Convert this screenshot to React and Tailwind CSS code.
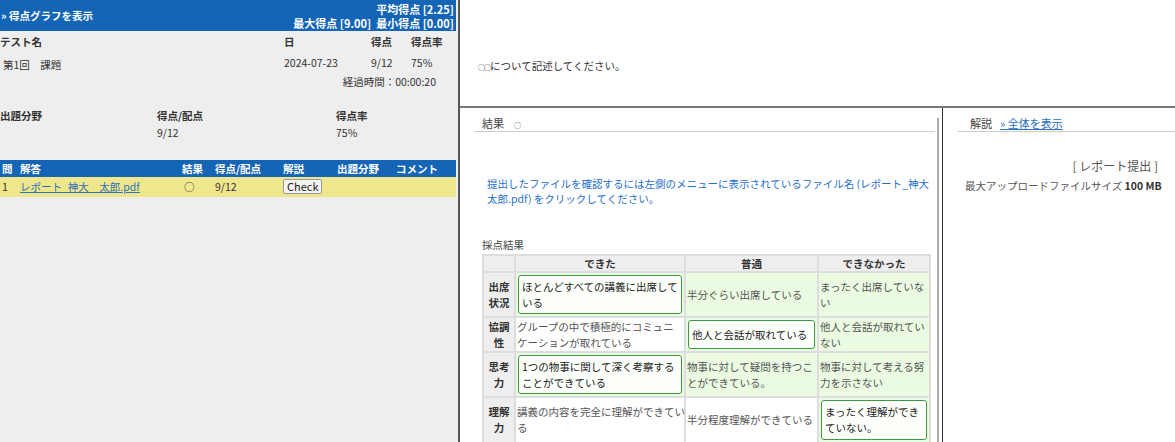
import React from 'react';

const rows = [
  { head: ['出席', '状況'], pick: 1, cells: [['ほとんどすべての講義に出席して', 'いる'], ['半分ぐらい出席している'], ['まったく出席していな', 'い']], h: 'h-[43px]' },
  { head: ['協調', '性'], pick: 2, cells: [['グループの中で積極的にコミュニ', 'ケーションが取れている'], ['他人と会話が取れている'], ['他人と会話が取れてい', 'ない']], h: 'h-[33px]' },
  { head: ['思考', '力'], pick: 1, cells: [['1つの物事に関して深く考察する', 'ことができている'], ['物事に対して疑問を持つこ', 'とができている。'], ['物事に対して考える努', '力を示さない']], h: 'h-[43px]' },
  { head: ['理解', '力'], pick: 3, cells: [['講義の内容を完全に理解ができてい', 'る'], ['半分程度理解ができている'], ['まったく理解ができ', 'ていない。']], h: 'h-[44px]' },
]

const Lines = ({ lines }) => lines.map((l, i) => <div key={i} className="whitespace-nowrap">{l}</div>)

const ScoreCell = ({ lines, col, pick, h }) => {
  const green = col > pick
  if (col === pick) {
    return (
      <div className={`${h} bg-[#eafbe2] p-[2px] flex items-center`}>
        <div className="w-full h-full rounded-[3px] border border-[#3f9b3f] bg-[#fcfffa] px-[3px] flex flex-col justify-center text-[#222]">
          <Lines lines={lines} />
        </div>
      </div>
    )
  }
  return (
    <div className={`${h} ${green ? 'bg-[#eafbe2]' : 'bg-white'} px-[1px] flex flex-col justify-center text-[#555]`}>
      <Lines lines={lines} />
    </div>
  )
}

export default function App() {
  return (
    <div className="flex w-[1175px] h-[442px] overflow-hidden bg-white font-['Noto_Sans_CJK_JP','Noto_Sans',sans-serif] text-[#333]">
      {/* left menu */}
      <div className="w-[460px] shrink-0 bg-[#eeeeee] border-r-2 border-[#555] text-[10.5px]">
        <div className="w-[456px] h-[31px] bg-[#1565b7] text-white font-bold flex items-center justify-between pr-[2px]">
          <div className="pl-[1px]">» 得点グラフを表示</div>
          <div className="text-right leading-[14px] text-[11px]">
            <div>平均得点 [2.25]</div>
            <div>最大得点 [9.00] &nbsp;最小得点 [0.00]</div>
          </div>
        </div>

        <div className="grid grid-cols-[284px_87px_40px_1fr] leading-[14px]">
          <div className="font-bold pt-[4px] h-[22px]">テスト名</div>
          <div className="font-bold pt-[4px]">日</div>
          <div className="font-bold pt-[4px]">得点</div>
          <div className="font-bold pt-[4px]">得点率</div>
          <div className="pl-[3px] pt-[5px] h-[22px]">第1回　課題</div>
          <div className="pt-[3px]">2024-07-23</div>
          <div className="pt-[3px]">9/12</div>
          <div className="pt-[3px]">75%</div>
        </div>
        <div className="w-[436px] text-right leading-[14px]">経過時間：00:00:20</div>

        <div className="grid grid-cols-[157px_179px_1fr] leading-[14px] mt-[20px]">
          <div className="font-bold h-[17px]">出題分野</div>
          <div className="font-bold">得点/配点</div>
          <div className="font-bold">得点率</div>
          <div></div>
          <div>9/12</div>
          <div>75%</div>
        </div>

        <div className="w-[456px] mt-[20px]">
          <div className="grid grid-cols-[20px_162px_33px_68px_54px_59px_1fr] h-[17px] bg-[#1565b7] text-white font-bold items-center">
            <div className="pl-[2px]">問</div>
            <div>解答</div>
            <div>結果</div>
            <div>得点/配点</div>
            <div>解説</div>
            <div>出題分野</div>
            <div>コメント</div>
          </div>
          <div className="grid grid-cols-[20px_162px_33px_68px_54px_59px_1fr] h-[20px] bg-[#f0e68c] items-center">
            <div className="pl-[2px]">1</div>
            <div><span className="text-[#2a6fc0] underline">レポート_神大　太郎.pdf</span></div>
            <div className="pl-[2px]">○</div>
            <div>9/12</div>
            <div>
              <button className="h-[15px] px-[3px] text-[11px] leading-[13px] text-[#222] bg-[#f4f4f4] border border-[#999] rounded-[2px]">Check</button>
            </div>
            <div></div>
            <div></div>
          </div>
        </div>
      </div>

      {/* right area */}
      <div className="flex-1 flex flex-col min-w-0">
        <div className="h-[108px] shrink-0 border-b-2 border-[#777] pl-[18px] pt-[59px] text-[10.5px] leading-[14px] text-[#333]">
          <span className="text-[7px] tracking-[-1px]">○○</span>について記述してください。
        </div>

        <div className="flex flex-1 min-h-0">
          {/* result frame */}
          <div className="w-[483px] shrink-0 border-r border-[#333] flex">
            <div className="w-[460px] ml-[15px] shrink-0">
              <div className="h-[24px] border-b border-[#ccc] pl-[7px] pt-[8px] text-[11px] leading-[14px] text-[#444]">
                結果<span className="ml-[10px] text-[7px]">○</span>
              </div>
              <div className="mt-[44px] pl-[12px] text-[10.5px] leading-[15px] text-[#1f6fcf]">
                <div className="whitespace-nowrap">提出したファイルを確認するには左側のメニューに表示されているファイル名 (レポート_神大</div>
                <div className="whitespace-nowrap">太郎.pdf) をクリックしてください。</div>
              </div>
              <div className="mt-[32px] pl-[7px] text-[10.5px] leading-[14px] text-[#444]">採点結果</div>
              <div className="ml-[7px] mt-[2px] w-[449px] grid grid-cols-[30px_168px_131px_110px] gap-[2px] p-[2px] bg-[#dddddd] text-[10.5px] leading-[16px]">
                <div className="h-[15px] bg-[#eeeeee]"></div>
                <div className="bg-[#eeeeee] font-bold text-center leading-[15px]">できた</div>
                <div className="bg-[#eeeeee] font-bold text-center leading-[15px]">普通</div>
                <div className="bg-[#eeeeee] font-bold text-center leading-[15px]">できなかった</div>
                {rows.map((r, i) => (
                  <React.Fragment key={i}>
                    <div className={`${r.h} bg-[#eeeeee] font-bold text-center flex flex-col justify-center text-[#333]`}>
                      <Lines lines={r.head} />
                    </div>
                    {r.cells.map((c, j) => (
                      <ScoreCell key={j} lines={c} col={j + 1} pick={r.pick} h={r.h} />
                    ))}
                  </React.Fragment>
                ))}
              </div>
            </div>
            <div className="w-[2px] ml-[2px] mt-[10px] bg-[#aaa]"></div>
          </div>

          {/* explanation frame */}
          <div className="flex-1 min-w-0">
            <div className="h-[24px] ml-[15px] border-b border-[#ccc] pl-[12px] pt-[8px] text-[11px] leading-[14px] text-[#444]">
              解説<span className="ml-[8px] text-[#2a6fc0] underline">» 全体を表示</span>
            </div>
            <div className="w-[215px] text-right mt-[26px] text-[12px] leading-[16px] text-[#555]">[ レポート提出 ]</div>
            <div className="pl-[22px] mt-[5px] text-[10.5px] leading-[14px] text-[#555]">
              最大アップロードファイルサイズ <span className="font-bold text-[#333]">100 MB</span>
            </div>
          </div>
        </div>
      </div>
    </div>
  )
}
